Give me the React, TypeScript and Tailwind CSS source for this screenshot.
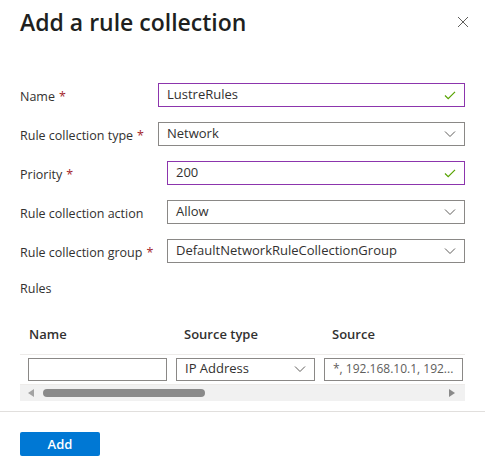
import React from "react";

const font = { fontFamily: '"Open Sans", "Noto Sans", sans-serif' };

function Chevron() {
  return (
    <svg viewBox="0 0 12 12" className="h-3 w-3 text-[#605e5c]" fill="none" stroke="currentColor" strokeWidth="1">
      <path d="M1 3.5l5 5 5-5" />
    </svg>
  );
}

function Check() {
  return (
    <svg viewBox="0 0 12 12" className="h-3 w-3 text-[#57a300]" fill="none" stroke="currentColor" strokeWidth="1.2">
      <path d="M1 6.5l3.2 3.2L11 2.8" />
    </svg>
  );
}

function Label({ text, required }: { text: string; required?: boolean }) {
  return (
    <span className="text-[12.5px] text-[#323130]">
      {text}
      {required && <span className="ml-1 text-[#a4262c]">*</span>}
    </span>
  );
}

function TextBox({ value, valid }: { value: string; valid?: boolean }) {
  return (
    <div
      className={`flex h-6 flex-1 items-center justify-between border px-2 ${
        valid ? "border-[#8c35ad]" : "border-[#8a8886]"
      }`}
    >
      <span className="text-[13px] text-[#323130]">{value}</span>
      {valid && <Check />}
    </div>
  );
}

function Dropdown({ value }: { value: string }) {
  return (
    <div className="flex h-6 flex-1 items-center justify-between border border-[#8a8886] px-2">
      <span className="text-[13px] text-[#323130]">{value}</span>
      <Chevron />
    </div>
  );
}

export default function App() {
  return (
    <div className="h-[472px] w-[485px] bg-white" style={font}>
      <div className="flex items-start justify-between pl-5 pr-4 pt-[5px]">
        <h1 className="text-[23px] font-semibold text-[#201f1e]">Add a rule collection</h1>
        <svg viewBox="0 0 12 12" className="mt-[11px] h-3 w-3 text-[#605e5c]" fill="none" stroke="currentColor" strokeWidth="1">
          <path d="M1 1l10 10M11 1L1 11" />
        </svg>
      </div>

      <div className="mt-[43px] flex flex-col gap-[15px] px-5">
        <div className="flex items-center">
          <div className="w-[138px]"><Label text="Name" required /></div>
          <TextBox value="LustreRules" valid />
        </div>
        <div className="flex items-center">
          <div className="w-[138px]"><Label text="Rule collection type" required /></div>
          <Dropdown value="Network" />
        </div>
        <div className="flex items-center">
          <div className="w-[147px]"><Label text="Priority" required /></div>
          <TextBox value="200" valid />
        </div>
        <div className="flex items-center">
          <div className="w-[147px]"><Label text="Rule collection action" /></div>
          <Dropdown value="Allow" />
        </div>
        <div className="flex items-center">
          <div className="w-[147px]"><Label text="Rule collection group" required /></div>
          <Dropdown value="DefaultNetworkRuleCollectionGroup" />
        </div>
      </div>

      <div className="mt-[12px] px-5">
        <Label text="Rules" />
      </div>

      <div className="mx-5 mt-[19px]">
        <div className="flex h-[37px] items-center border-b border-[#edebe9] pb-[2px] text-[13px] font-semibold text-[#323130]">
          <div className="w-[148px] pl-[9px]">Name</div>
          <div className="w-[148px] pl-4">Source type</div>
          <div className="w-[148px] pl-4">Source</div>
        </div>
        <div className="flex h-[30px] items-center border-b border-[#edebe9]">
          <div className="w-[148px] pl-2">
            <div className="h-[23px] w-[139px] border border-[#8a8886]" />
          </div>
          <div className="w-[148px] pl-2">
            <div className="flex h-[23px] w-[139px] items-center justify-between border border-[#8a8886] px-2">
              <span className="text-[13px] text-[#323130]">IP Address</span>
              <Chevron />
            </div>
          </div>
          <div className="w-[148px] pl-2">
            <div className="flex h-[23px] w-[139px] items-center border border-[#8a8886] px-2">
              <span className="whitespace-nowrap text-[12px] text-[#605e5c]">*, 192.168.10.1, 192...</span>
            </div>
          </div>
        </div>
        <div className="flex h-4 items-center bg-[#f1f1f1] px-[8px]">
          <svg viewBox="0 0 6 8" className="h-2 w-[6px] text-[#a3a3a3]" fill="currentColor">
            <path d="M6 0v8L0 4z" />
          </svg>
          <div className="ml-[9px] h-2 w-[162px] rounded-full bg-[#8a8a8a]" />
          <div className="flex-1" />
          <svg viewBox="0 0 6 8" className="mr-[2px] h-2 w-[6px] text-[#8a8a8a]" fill="currentColor">
            <path d="M0 0v8l6-4z" />
          </svg>
        </div>
      </div>

      <div className="mt-[10px] border-t border-[#e1dfdd]" />

      <div className="px-5 pt-[19px]">
        <button className="h-6 w-20 rounded-[2px] bg-[#0078d4] text-[13px] font-semibold text-white">Add</button>
      </div>
    </div>
  );
}
